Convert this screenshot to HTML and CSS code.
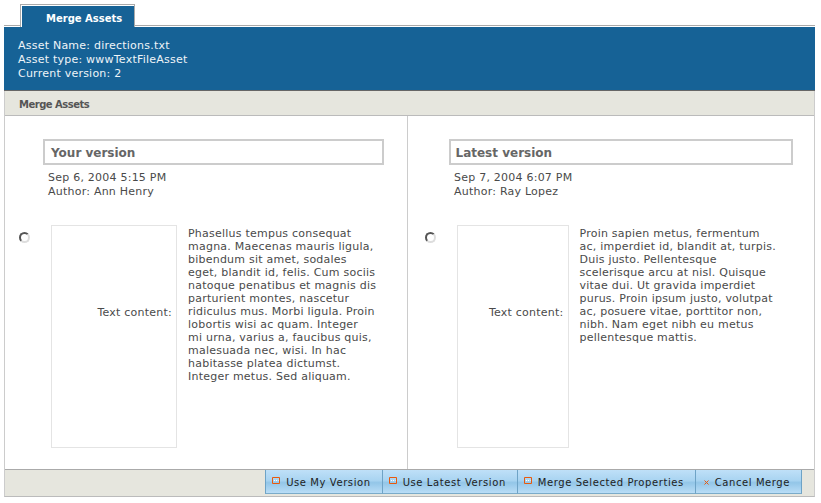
FILE: index.html
```html
<!DOCTYPE html>
<html lang="en">
<head>
    <meta charset="UTF-8">
    <title>Merge Assets</title>
    <link rel="stylesheet" href="styles.css">
</head>
<body>
    <div class="tab-row">
        <div class="tab">Merge Assets</div>
    </div>

    <!-- Asset info -->
    <div class="asset-info">
        <div>Asset Name: directions.txt</div>
        <div>Asset type: wwwTextFileAsset</div>
        <div>Current version: 2</div>
    </div>

    <div class="panel">
        <div class="panel-title">Merge Assets</div>

        <div class="versions">
            <!-- Your version -->
            <div class="version version-left">
                <h2 class="version-title">Your version</h2>
                <div class="version-meta">
                    <div>Sep 6, 2004 5:15 PM</div>
                    <div>Author: Ann Henry</div>
                </div>
                <div class="property">
                    <span class="radio"></span>
                    <div class="property-label">Text content:</div>
                    <p class="property-value">Phasellus tempus consequat magna. Maecenas mauris ligula, bibendum sit amet, sodales eget, blandit id, felis. Cum sociis natoque penatibus et magnis dis parturient montes, nascetur ridiculus mus. Morbi ligula. Proin lobortis wisi ac quam. Integer<br>mi urna, varius a, faucibus quis, malesuada nec, wisi. In hac habitasse platea dictumst. Integer metus. Sed aliquam.</p>
                </div>
            </div>

            <!-- Latest version -->
            <div class="version version-right">
                <h2 class="version-title">Latest version</h2>
                <div class="version-meta">
                    <div>Sep 7, 2004 6:07 PM</div>
                    <div>Author: Ray Lopez</div>
                </div>
                <div class="property">
                    <span class="radio"></span>
                    <div class="property-label">Text content:</div>
                    <p class="property-value">Proin sapien metus, fermentum ac, imperdiet id, blandit at, turpis. Duis justo. Pellentesque scelerisque arcu at nisl. Quisque vitae dui. Ut gravida imperdiet purus. Proin ipsum justo, volutpat ac, posuere vitae, porttitor non, nibh. Nam eget nibh eu metus pellentesque mattis.</p>
                </div>
            </div>
        </div>

        <!-- Actions -->
        <div class="actions">
            <button class="action" type="button">
                <svg class="icon" width="8" height="7" viewBox="0 0 8 7"><path d="M0.5 0.5H7.5V6.5H0.5Z" fill="none" stroke="#e8590c"/><path d="M2 3.5H3M4 3.5H5M6 3.5H6.5" stroke="#fff"/></svg>
                Use My Version
            </button>
            <button class="action" type="button">
                <svg class="icon" width="8" height="7" viewBox="0 0 8 7"><path d="M0.5 0.5H7.5V6.5H0.5Z" fill="none" stroke="#e8590c"/><path d="M2 3.5H3M4 3.5H5M6 3.5H6.5" stroke="#fff"/></svg>
                Use Latest Version
            </button>
            <button class="action" type="button">
                <svg class="icon" width="8" height="7" viewBox="0 0 8 7"><path d="M0.5 0.5H7.5V6.5H0.5Z" fill="none" stroke="#e8590c"/><path d="M2 3.5H3M4 3.5H5M6 3.5H6.5" stroke="#fff"/></svg>
                Merge Selected Properties
            </button>
            <button class="action action-cancel" type="button">
                <svg class="icon icon-cancel" width="5" height="5" viewBox="0 0 5 5"><path d="M0.5 0.5L4.5 4.5M4.5 0.5L0.5 4.5" fill="none" stroke="#e8590c"/></svg>
                Cancel Merge
            </button>
        </div>
    </div>
</body>
</html>
```

FILE: styles.css
```css
/* General */
body {
    font-family: 'DejaVu Sans', Verdana, sans-serif;
    font-size: 11px;
    line-height: 13px;
    letter-spacing: 0.23px;
    color: #4a4a4a;
    background-color: #fff;
    margin: 0;
    padding: 4px 6px 0 4px;
}

/* Tab */
.tab-row {
    display: flex;
    padding-left: 16px;
    height: 21px;
    border-bottom: 1px solid #a9a9a9;
}

.tab {
    position: relative;
    box-sizing: border-box;
    width: 115px;
    height: 23px;
    margin-bottom: -2px;
    padding-left: 25px;
    background-color: #166296;
    border: 1px solid #aaa;
    border-bottom: none;
    box-shadow: inset 1px 1px 0 #fff;
    color: #fff;
    font-weight: bold;
    font-size: 10px;
    letter-spacing: 0;
    line-height: 27px;
}

/* Asset info */
.asset-info {
    box-sizing: border-box;
    height: 65px;
    padding: 12px 14px 0;
    background-color: #166296;
    border-top: 1px solid #fff;
    border-bottom: 1px solid #666;
    color: #eef4f8;
    line-height: 14px;
}

/* Panel */
.panel {
    border-left: 1px solid #ccc;
    border-right: 1px solid #ccc;
    border-bottom: 1px solid #bbb;
}

.panel-title {
    height: 24px;
    padding-left: 14px;
    background-color: #e6e6de;
    border-bottom: 1px solid #bbb;
    color: #555;
    font-weight: bold;
    font-size: 10px;
    letter-spacing: -0.5px;
    line-height: 27px;
}

.versions {
    display: flex;
    height: 353px;
}

.version {
    box-sizing: border-box;
    padding-top: 23px;
}

.version-left {
    width: 403px;
    padding-left: 38px;
    padding-right: 23px;
    border-right: 1px solid #ccc;
}

.version-right {
    width: 407px;
    padding-left: 41px;
    padding-right: 21px;
}

.version-title {
    margin: 0;
    height: 26px;
    box-sizing: border-box;
    padding-left: 6px;
    border: 2px solid #ccc;
    color: #666;
    font-size: 12px;
    letter-spacing: 0;
    line-height: 25px;
}

.version-right .version-title {
    padding-left: 5px;
}

.version-meta {
    margin-top: 6px;
    padding-left: 5px;
    line-height: 14px;
}

.version-right .version-meta {
    padding-left: 5.5px;
}

/* Property row */
.property {
    display: flex;
    margin-top: 26px;
    margin-left: -24px;
}

.radio {
    flex: none;
    width: 11px;
    height: 11px;
    box-sizing: border-box;
    margin-top: 7px;
    margin-right: 21px;
    border: 2px solid #555;
    border-right-color: #ddd;
    border-bottom-color: #ddd;
    border-radius: 50%;
}

.property-label {
    flex: none;
    display: flex;
    align-items: center;
    justify-content: flex-end;
    box-sizing: border-box;
    width: 126px;
    height: 223px;
    padding-right: 4px;
    padding-bottom: 48px;
    border: 1px solid #e4e4e4;
}

.property-value {
    flex: none;
    margin: 0 0 0 11px;
    width: 190px;
    padding-top: 2px;
}

.version-right .property-label {
    width: 112px;
}

.version-right .property-value {
    width: 197px;
}

/* Actions */
.actions {
    display: flex;
    justify-content: flex-end;
    height: 26px;
    padding: 0 12px 0 0;
    background-color: #e6e6de;
    border-top: 1px solid #aaa;
}

.action {
    display: flex;
    align-items: center;
    gap: 6px;
    height: 24px;
    padding: 2px 11px 0 6px;
    background: linear-gradient(#bfe0f8, #a9d4f1 45%, #93c6e8 55%, #b9ddf6);
    border: none;
    border-left: 1px solid #6ea3c6;
    border-bottom: 1px solid #7aabc9;
    color: #222;
    font-family: inherit;
    font-size: 10px;
    letter-spacing: 0.58px;
    cursor: pointer;
}

.icon {
    margin-top: -4px;
}

.icon-cancel {
    margin-top: 0;
}

.action-cancel {
    border-right: 1px solid #6ea3c6;
    padding-left: 8px;
    padding-right: 11px;
}
```
